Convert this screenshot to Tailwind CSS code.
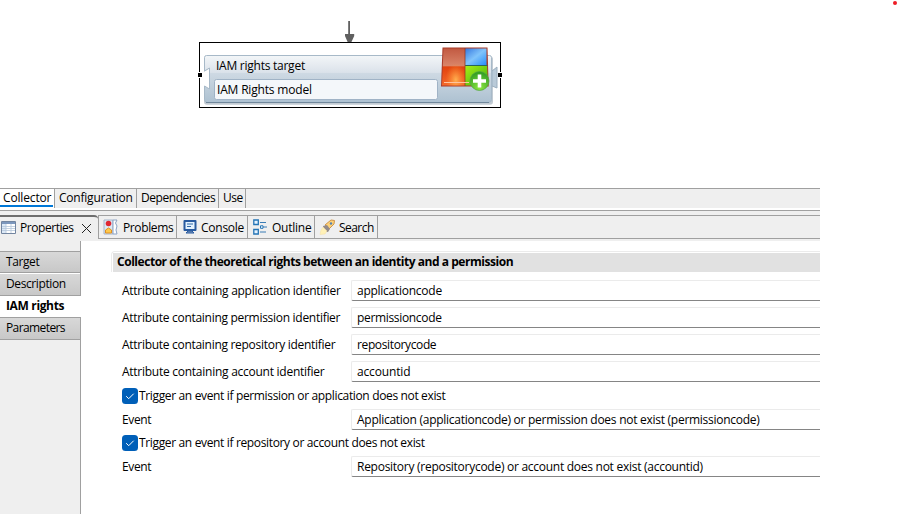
<!DOCTYPE html>
<html lang="en">
<head>
<meta charset="utf-8">
<title>Collector properties</title>
<script src="https://cdn.jsdelivr.net/npm/@tailwindcss/browser@4"></script>
</head>
<body class="relative h-[514px] w-[898px] overflow-hidden bg-white font-['Open_Sans','Noto_Sans',sans-serif] text-[12px] leading-4 tracking-[-0.15px] whitespace-nowrap text-black">
<div class="absolute top-[1px] left-[893px] size-1 rounded-full bg-[#ee1c25]"></div>

<!-- Diagram canvas -->
<div class="relative h-[188px]">
  <svg class="absolute top-[20px] left-[344px]" width="11" height="25" viewBox="0 0 11 25"><path d="M4.200 1h1.800v13h4.200v2L6.500 24h-2L1 16v-2h3.200z" fill="#606060"/></svg>
  <svg class="absolute top-[40px] left-[196px]" width="308" height="70" viewBox="196 40 308 70">
    <defs>
      <linearGradient id="box" x1="0" y1="0" x2="0" y2="1"><stop offset="0" stop-color="#f3f6f8"/><stop offset=".36" stop-color="#dbe2ea"/><stop offset=".38" stop-color="#ced9e3"/><stop offset="1" stop-color="#adc1d1"/></linearGradient>
      <linearGradient id="red" x1="0" y1="0" x2="0" y2="1"><stop offset="0" stop-color="#c25a42"/><stop offset=".46" stop-color="#d98468"/><stop offset=".5" stop-color="#e2420e"/><stop offset="1" stop-color="#f4682a"/></linearGradient>
      <radialGradient id="glow" cx=".6" cy=".85" r=".45"><stop offset="0" stop-color="#ffb050"/><stop offset="1" stop-color="#ff8a30" stop-opacity="0"/></radialGradient>
      <linearGradient id="blue" x1="0" y1="0" x2="1" y2="1"><stop offset="0" stop-color="#3578e0"/><stop offset=".5" stop-color="#81c4fb"/><stop offset="1" stop-color="#268dfa"/></linearGradient>
      <linearGradient id="green" x1="0" y1="0" x2="1" y2="1"><stop offset="0" stop-color="#a8ee19"/><stop offset="1" stop-color="#3bb00a"/></linearGradient>
      <radialGradient id="plus" cx=".5" cy=".85" r=".8"><stop offset="0" stop-color="#8de643"/><stop offset="1" stop-color="#329e22"/></radialGradient>
    </defs>
    <rect x="199.500" y="42.500" width="301" height="65" fill="#fff" stroke="#000"/>
    <path d="M205 56h286q2 0 2 2v43q0 3-3 3H207q-3 0-3-3V86l5 3V68l-5 3V58z" fill="#8698a8" opacity=".5" transform="translate(0 .8)"/>
    <path d="M492 71l5-4v21l-5-2z" fill="#b9cad8" stroke="#9cafbf"/>
    <path d="M206.500 55.500h283q2 0 2 2v42q0 3-3 3h-281q-3 0-3-3V86l5 3V68l-5 3V57.500q0-2 2-2z" fill="url(#box)" stroke="#a7b9c8"/>
    <path d="M206 102.500h283" stroke="#71889c"/>
    <rect x="214.500" y="79.500" width="223" height="20" rx="2" fill="#f4f7fa" stroke="#a0b3c6"/>
    <path d="M442.500 47.500h45l1.200 39h-47.700z" fill="#a83b29"/>
    <path d="M443.500 48.500H465V85.500h-23z" fill="url(#red)"/>
    <path d="M443.500 48.500H465V85.500h-23z" fill="url(#glow)"/>
    <path d="M465 48.500h21.500V65H465z" fill="url(#blue)"/>
    <path d="M465 66h22l1 19.500h-23z" fill="url(#green)"/>
    <path d="M465 48v38" stroke="#943a24" stroke-width=".8"/><path d="M465.500 65.500h22" stroke="#27645b"/>
    <path d="M444 82.500h25" stroke="#ffc4a0"/>
    <circle cx="479.500" cy="81" r="9.500" fill="url(#plus)" stroke="#55a544" stroke-width=".7"/>
    <path d="M479.500 74.500v13M473 81h13" stroke="#fff" stroke-width="3.600"/>
    <path d="M197 72h5v6h-5zM498 72h5v6h-5z" fill="#fff"/>
    <path d="M198 73h4v4h-4zM498 73h4v4h-4z" fill="#000"/>
  </svg>
  <div class="absolute top-[58px] left-[216px] flex flex-col gap-2"><span class="tracking-[-0.25px]">IAM rights target</span><span class="pl-px tracking-[-0.18px]">IAM Rights model</span></div>
</div>

<main class="w-[820px]">
  <!-- Editor tabs -->
  <div class="flex h-[20px] border-t border-[#a0a0a0] bg-[#efefef]">
    <div class="relative w-[54px] bg-white pt-[1px] pl-[3px]">Collector<i class="absolute bottom-[1px] left-0 h-0.5 w-[53px] bg-[#0078d7]"></i></div>
    <div class="w-[83px] border-x border-[#a0a0a0] pt-[1px] pl-1 tracking-[-0.22px]">Configuration</div>
    <div class="w-[82px] border-r border-[#a0a0a0] pt-[1px] pl-1 tracking-[-0.45px]">Dependencies</div>
    <div class="w-[27px] border-r border-[#a0a0a0] pt-[1px] pl-1 tracking-[-0.5px]">Use</div>
  </div>
  <div class="mt-[2px] h-[5px] border-t border-[#a0a0a0] bg-[#efefef]"></div>

  <!-- View tabs -->
  <div class="flex h-[26px] bg-[#efefef]">
    <div class="flex h-6 w-[98px] items-center rounded-tr-sm border-t-2 border-[#6e6e6e]">
      <svg class="mb-px ml-px" width="15" height="14" viewBox="0 0 15 14"><path d="M.5.5h14v12H.5z" fill="#fff" stroke="#7285a0"/><path d="M1 1h13v2H1z" fill="#7c97bd"/><path d="M1 3h4v9H1z" fill="#dce9f7"/><path d="M5 3v9M10 3v9M1 5.500h13M1 7.500h13M1 9.500h13" stroke="#b5c6da" stroke-width=".8"/></svg>
      <span class="ml-[4px] w-[60px] tracking-[-0.45px]">Properties</span>
      <svg class="ml-[2px]" width="9" height="9" viewBox="0 0 9 9"><path d="M0 0l9 9M9 0L0 9" stroke="#222"/></svg>
    </div>
    <div class="flex h-6 flex-1 border-y border-l border-[#a0a0a0]">
      <div class="flex w-[78px] items-center border-r border-[#a0a0a0] pl-1">
        <svg width="15" height="16" viewBox="0 0 15 16"><path d="M1 1h9v14H1z" fill="#dce7f3" stroke="#a4b4ca"/><path d="M10 1h4q-3 3 0 6-2 4 0 8h-4z" fill="#fff" stroke="#8ca3c4"/><circle cx="5.500" cy="4.500" r="2.800" fill="#df2733"/><path d="M5.500 9l3 2v3h-6v-3z" fill="#ffc94b" stroke="#df9023"/></svg>
        <span class="mt-[2px] ml-[5px] tracking-[-0.38px]">Problems</span>
      </div>
      <div class="flex w-[71px] items-center border-r border-[#a0a0a0] pl-1.5">
        <svg width="14" height="14" viewBox="0 0 14 14"><path d="M1.500 1h11v9h-11z" fill="#e3f2ff" stroke="#285aa0" stroke-width="2" stroke-linejoin="round"/><path d="M4 4h6M4 6.500h4" stroke="#3168a7"/><path d="M5 11h4l2 2H3z" fill="#7a96b9" stroke="#285aa0"/></svg>
        <span class="mt-[2px] ml-[4px] tracking-[-0.25px]">Console</span>
      </div>
      <div class="flex w-[67px] items-center border-r border-[#a0a0a0] pl-[5px]">
        <svg width="14" height="16" viewBox="0 0 14 16"><path d="M.8 1h4.500v4.500H.8zM.8 10.500h4.500V15H.8z" fill="#e5f3ff" stroke="#2474b5" stroke-width="1.300"/><path d="M7 3.500h6M10 8h4M7 13h6" stroke="#3a7cb5"/><path d="M7.500 6.800h2.500v2.500H7.500z" fill="#fff" stroke="#2474b5"/></svg>
        <span class="mt-[2px] ml-[5px] tracking-[-0.25px]">Outline</span>
      </div>
      <div class="flex w-[63px] items-center border-r border-[#a0a0a0] pl-1">
        <svg width="17" height="16" viewBox="0 0 17 16"><path d="M6 6l6-5 3.500.5L15 5l-5 5z" fill="#ffd278" stroke="#cf954b"/><path d="M4 7l4-1 3 4-2 3-4 0z" fill="#938b8b"/><path d="M4 8l4 4-2 3-5 .5L2 11z" fill="#fff1b7" stroke="#f6dfa2" stroke-width=".5"/><circle cx="12" cy="4.500" r="1.200" fill="#5581b1"/></svg>
        <span class="mt-[2px] ml-[3px] tracking-[-0.55px]">Search</span>
      </div>
    </div>
  </div>

  <div class="flex h-[273px]">
    <!-- Section list -->
    <nav class="w-[81px] border-r border-[#a0a0a0] bg-[#efefef] pt-[10px]">
      <div class="h-[22px] border-y border-t-[#a0a0a0] border-b-[#a0a0a0] bg-linear-to-b from-[#d8d8d8] to-[#c8c8c8] pt-[2px] pl-1.5 tracking-[-0.4px]">Target</div>
      <div class="h-[23px] border-y border-t-white border-b-[#a0a0a0] bg-linear-to-b from-[#d8d8d8] to-[#c8c8c8] pt-[2px] pl-1.5 tracking-[-0.4px]">Description</div>
      <div class="mr-[-1px] h-[21px] bg-white pt-[2px] pl-1.5 font-bold tracking-[-0.35px]">IAM rights</div>
      <div class="h-[23px] border-y border-[#a0a0a0] bg-linear-to-b from-[#d8d8d8] to-[#c8c8c8] pt-[2px] pl-1.5 tracking-[-0.6px]">Parameters</div>
    </nav>

    <!-- Attribute form -->
    <section class="flex-1 pt-[10px] pl-[30px]">
      <div class="h-[21px] rounded-tl-sm border-t border-l border-[#ebebeb] pt-px pl-px"><h1 class="h-[19px] bg-[#e1e1e1] pt-px pl-1 font-bold tracking-[-0.46px]">Collector of the theoretical rights between an identity and a permission</h1></div>
      <div class="grid grid-cols-[229px_1fr] gap-y-1.5 pt-2 pl-[11px] tracking-[-0.26px]">
        <label class="pt-[3px]">Attribute containing application identifier</label><div class="h-[21px] rounded-l-xs border-t border-b border-l border-[#ebebeb] border-b-[#858585] pt-[2px] pl-[5px]">applicationcode</div>
        <label class="pt-[3px] tracking-[-0.29px]">Attribute containing permission identifier</label><div class="h-[21px] rounded-l-xs border-t border-b border-l border-[#ebebeb] border-b-[#858585] pt-[2px] pl-[5px] tracking-[-0.33px]">permissioncode</div>
        <label class="pt-[3px] tracking-[-0.29px]">Attribute containing repository identifier</label><div class="h-[21px] rounded-l-xs border-t border-b border-l border-[#ebebeb] border-b-[#858585] pt-[2px] pl-[5px] tracking-[-0.37px]">repositorycode</div>
        <label class="pt-[3px]">Attribute containing account identifier</label><div class="h-[21px] rounded-l-xs border-t border-b border-l border-[#ebebeb] border-b-[#858585] pt-[2px] pl-[5px] tracking-[-0.15px]">accountid</div>
      </div>
      <div class="mt-1.5 flex h-4 pl-[11px]"><svg width="16" height="16" viewBox="0 0 16 16"><rect width="16" height="16" rx="3.500" fill="#005fb8"/><path d="M4.200 8.200l2.500 2.500 5-5" fill="none" stroke="#fff"/></svg><span class="ml-[1px] tracking-[-0.35px]">Trigger an event if permission or application does not exist</span></div>
      <div class="mt-[5px] grid grid-cols-[229px_1fr] pl-[11px]"><label class="pt-[3px] tracking-[-0.35px]">Event</label><div class="h-[21px] rounded-l-xs border-t border-b border-l border-[#ebebeb] border-b-[#858585] pt-[2px] pl-[5px] tracking-[-0.27px]">Application (applicationcode) or permission does not exist (permissioncode)</div></div>
      <div class="mt-[5px] flex h-4 pl-[11px]"><svg width="16" height="16" viewBox="0 0 16 16"><rect width="16" height="16" rx="3.500" fill="#005fb8"/><path d="M4.200 8.200l2.500 2.500 5-5" fill="none" stroke="#fff"/></svg><span class="ml-[1px] tracking-[-0.35px]">Trigger an event if repository or account does not exist</span></div>
      <div class="mt-[5px] grid grid-cols-[229px_1fr] pl-[11px]"><label class="pt-[3px] tracking-[-0.35px]">Event</label><div class="h-[21px] rounded-l-xs border-t border-b border-l border-[#ebebeb] border-b-[#858585] pt-[2px] pl-[5px] tracking-[-0.27px]">Repository (repositorycode) or account does not exist (accountid)</div></div>
    </section>
  </div>
</main>
</body>
</html>
